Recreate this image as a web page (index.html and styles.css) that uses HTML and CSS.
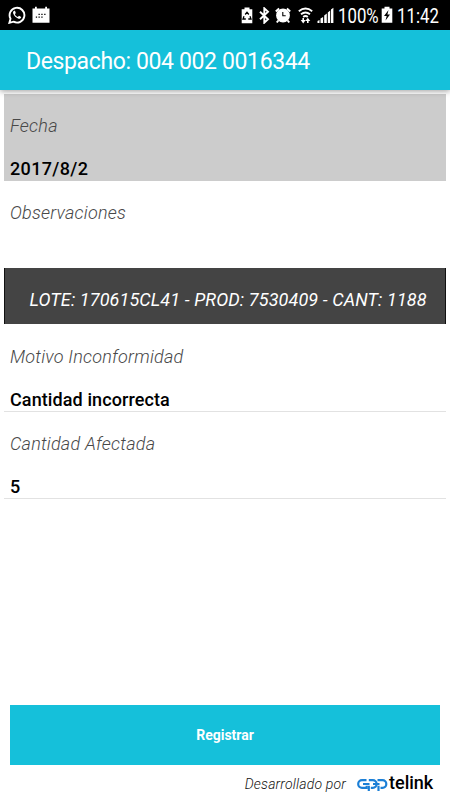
FILE: index.html
```
<!DOCTYPE html>
<html lang="es">
<head>
  <meta charset="UTF-8" />
  <meta name="viewport" content="width=device-width, initial-scale=1.0"/>
  <title>Despacho</title>
  <link rel="stylesheet" href="styles.css">
</head>
<body>
  <div class="status-bar">
    <svg class="icon whatsapp" width="18" height="18" viewBox="0 0 18 18">
      <path d="M1.400 16.800l1.100-4.100A7.400 7.400 0 1 1 5.500 15.700z" fill="none" stroke="#fff" stroke-width="1.900"/>
      <path d="M6.200 4.700c-.9.500-1.500 1.500-1 2.900 1 2.600 2.800 4.300 5.300 5.100 1.400.4 2.500-.3 2.700-1.700l-2.200-1.200-1.200 1.200c-1.300-.5-2.300-1.500-2.900-2.800l.9-1.100-.8-2.300z" fill="#fff"/>
    </svg>
    <svg class="icon calendar" width="18" height="18" viewBox="0 0 18 18">
      <path d="M.5 2.500H3V.7h1.800v1.800h8.400V.7H15v1.800h2.500v14.300H.5z" fill="#fff"/>
      <path d="M6.500 8.300h1.300M9.300 8.300h1.300M12.200 8.300h1.300M3.800 11.200h1.300M6.500 11.200h1.300M9.300 11.200h1.300" stroke="#000" stroke-width="1.300"/>
    </svg>

    <div class="status-right">
      <svg class="icon" width="12" height="17" viewBox="0 0 12 17">
        <path d="M3.500.5h5v1.700h2.800v14H.7v-14h2.800z" fill="#fff"/>
        <path d="M4.200 7.500L6 5.300l1.800 2.200M9 9.300l1 2.700H7.300M4.800 12H2l1-2.700" fill="none" stroke="#000" stroke-width="1.300"/>
      </svg>
      <svg class="icon bluetooth" width="11" height="17" viewBox="0 0 11 17">
        <path d="M1 4.700l8 7.500-3.700 3.500V1.300L9 4.800 1 12.300" fill="none" stroke="#fff" stroke-width="1.900"/>
      </svg>
      <svg class="icon alarm" width="16" height="17" viewBox="0 0 16 17">
        <circle cx="8" cy="8.500" r="6.900" fill="#fff"/>
        <path d="M.8 4.500l3.300-3M15.200 4.500l-3.300-3M3.300 13.500l-1.500 2M12.700 13.500l1.500 2" stroke="#fff" stroke-width="2"/>
        <path d="M7.800 5v3.800h2.900" fill="none" stroke="#000" stroke-width="1.100"/>
      </svg>
      <svg class="icon wifi" width="15" height="17" viewBox="0 0 15 17">
        <path d="M.8 4.200q6.700-5.200 13.400 0M3 7.200q4.500-3.600 9 0M5.200 10q2.300-1.800 4.600 0" fill="none" stroke="#fff" stroke-width="1.900"/>
        <path d="M5.200 11v3M9.800 12v4" stroke="#fff" stroke-width="1.600"/>
        <path d="M2.700 13h5L5.200 16.500zM7.300 14h5L9.800 10.800z" fill="#fff"/>
      </svg>
      <svg class="icon signal" width="17" height="17" viewBox="0 0 17 17">
        <path d="M.5 16v-2l2-1v3zM3.500 16v-4.500l2.600-1.500v6zM7.200 16V8.500L9.800 6.500V16zM10.800 16V5.500l2.400-2V16zM14 16V2.500l2.400-1.700V16z" fill="#fff"/>
      </svg>
      <span class="percent">100%</span>
      <svg class="icon battery" width="12" height="18" viewBox="0 0 12 18">
        <path d="M3.500.8h5v1.700h2.800v14.200H.7V2.500h2.800z" fill="#fff"/>
        <path d="M7.500 4L3 10h2.700L4.500 14.500 9 8.500H6.400z" fill="#000"/>
      </svg>
      <span class="clock">11:42</span>
    </div>
  </div>

  <header class="toolbar">
    <h1>Despacho: 004 002 0016344</h1>
  </header>

  <main class="content">
    <div class="field field-disabled">
      <div class="label">Fecha</div>
      <div class="value value-date">2017/8/2</div>
    </div>
    <div class="field field-notes">
      <div class="label">Observaciones</div>
    </div>

    <div class="lote">LOTE: 170615CL41 - PROD: 7530409 - CANT: 1188</div>

    <div class="field field-line">
      <div class="label">Motivo Inconformidad</div>
      <div class="value">Cantidad incorrecta</div>
    </div>
    <div class="field field-line">
      <div class="label">Cantidad Afectada</div>
      <div class="value">5</div>
    </div>
  </main>

  <button class="btn-registrar">Registrar</button>

  <footer class="footer">
    <span class="credit">Desarrollado por</span>
    <div class="brand">
      <!-- three chained links -->
      <svg width="32" height="16" viewBox="0 0 32 16">
        <g fill="none" stroke="#1b7fd6" stroke-width="2.200">
          <path d="M10.500 3.200H6a3.800 3.800 0 0 0 0 7.600h4.700V8.800"/>
          <path d="M7 7h6.500M17 7h6.500" stroke-width="1.800"/>
          <path d="M12.800 14V8.800M12.800 3.200h4a3.800 3.800 0 0 1 0 7.600h-2"/>
          <path d="M22.500 14V8.800M21.500 3.200h5a3.800 3.800 0 0 1 0 7.600h-2"/>
        </g>
      </svg>
      <span>telink</span>
    </div>
  </footer>
</body>
</html>
```
FILE: styles.css
```
* {
  box-sizing: border-box;
  margin: 0;
  padding: 0;
}

body {
  font-family: Roboto, sans-serif;
  background: #fff;
  height: 800px;
  display: flex;
  flex-direction: column;
  overflow: hidden;
}

.status-bar {
  height: 30px;
  padding: 0 11px 0 8px;
  background: #000;
  color: #fff;
  display: flex;
  align-items: center;
}

.icon {
  display: block;
  flex: none;
}

.calendar {
  margin-left: 6px;
}

.status-right {
  margin-left: auto;
  display: flex;
  align-items: center;
  font-size: 20px;
  line-height: 32px;
  white-space: nowrap;
}

.bluetooth {
  margin-left: 6px;
}

.alarm {
  margin-left: 5px;
}

.wifi {
  margin-left: 7px;
}

.signal {
  margin-left: 4px;
}

.percent,
.clock {
  padding-top: 2px;
  transform: scaleX(0.84);
  transform-origin: left;
}

.percent {
  width: 40px;
  margin-left: 4px;
}

.battery {
  margin-left: 3px;
}

.clock {
  width: 42px;
  margin-left: 4px;
}

.toolbar {
  height: 60px;
  padding-left: 26px;
  background: #15c0da;
  color: #fff;
  box-shadow: 0 1px 6px rgba(0, 0, 0, 0.4);
  position: relative;
}

.toolbar h1 {
  font-size: 23px;
  font-weight: 400;
  line-height: 64px;
  letter-spacing: -0.37px;
  white-space: nowrap;
}

.content {
  flex: 1;
  padding: 4px 4px 0;
}

.field {
  padding: 20px 6px 0;
}

.label {
  height: 24px;
  font-size: 18px;
  line-height: 24px;
  letter-spacing: 0.22px;
  font-style: italic;
  font-weight: 300;
  color: #484848;
}

.value {
  height: 24px;
  margin-top: 19px;
  font-size: 18px;
  line-height: 24px;
  letter-spacing: 0.1px;
  font-weight: 500;
  color: #000;
}

.value-date {
  letter-spacing: 0.35px;
}

.field-disabled {
  height: 87px;
  background: #ccc;
}

.field-notes {
  height: 87px;
}

.lote {
  height: 56px;
  padding: 8px 0 0 24.5px;
  background: #444;
  border: 1px solid #111;
  border-width: 0 1px;
  color: #fff;
  font-size: 18px;
  line-height: 48px;
  letter-spacing: 0.11px;
  font-style: italic;
  white-space: nowrap;
}

.field-line {
  height: 88px;
  padding-top: 21px;
  border-bottom: 1px solid #e2e2e2;
}

.field-line + .field-line {
  height: 87px;
  padding-top: 20px;
}

.btn-registrar {
  height: 60px;
  margin: 0 10px;
  border: none;
  background: #15c0da;
  color: #fff;
  font-family: inherit;
  font-size: 14px;
  font-weight: 700;
}

.footer {
  height: 35px;
  padding-right: 16px;
  display: flex;
  justify-content: flex-end;
}

.credit {
  font-size: 14px;
  line-height: 38px;
  letter-spacing: 0.18px;
  font-style: italic;
  font-weight: 300;
  color: #111;
}

.brand {
  width: 78px;
  margin-left: 10px;
  display: flex;
}

.brand svg {
  flex: none;
  margin-top: 12px;
}

.brand span {
  margin-left: 1px;
  font-size: 18px;
  line-height: 36px;
  font-weight: 500;
}
```
